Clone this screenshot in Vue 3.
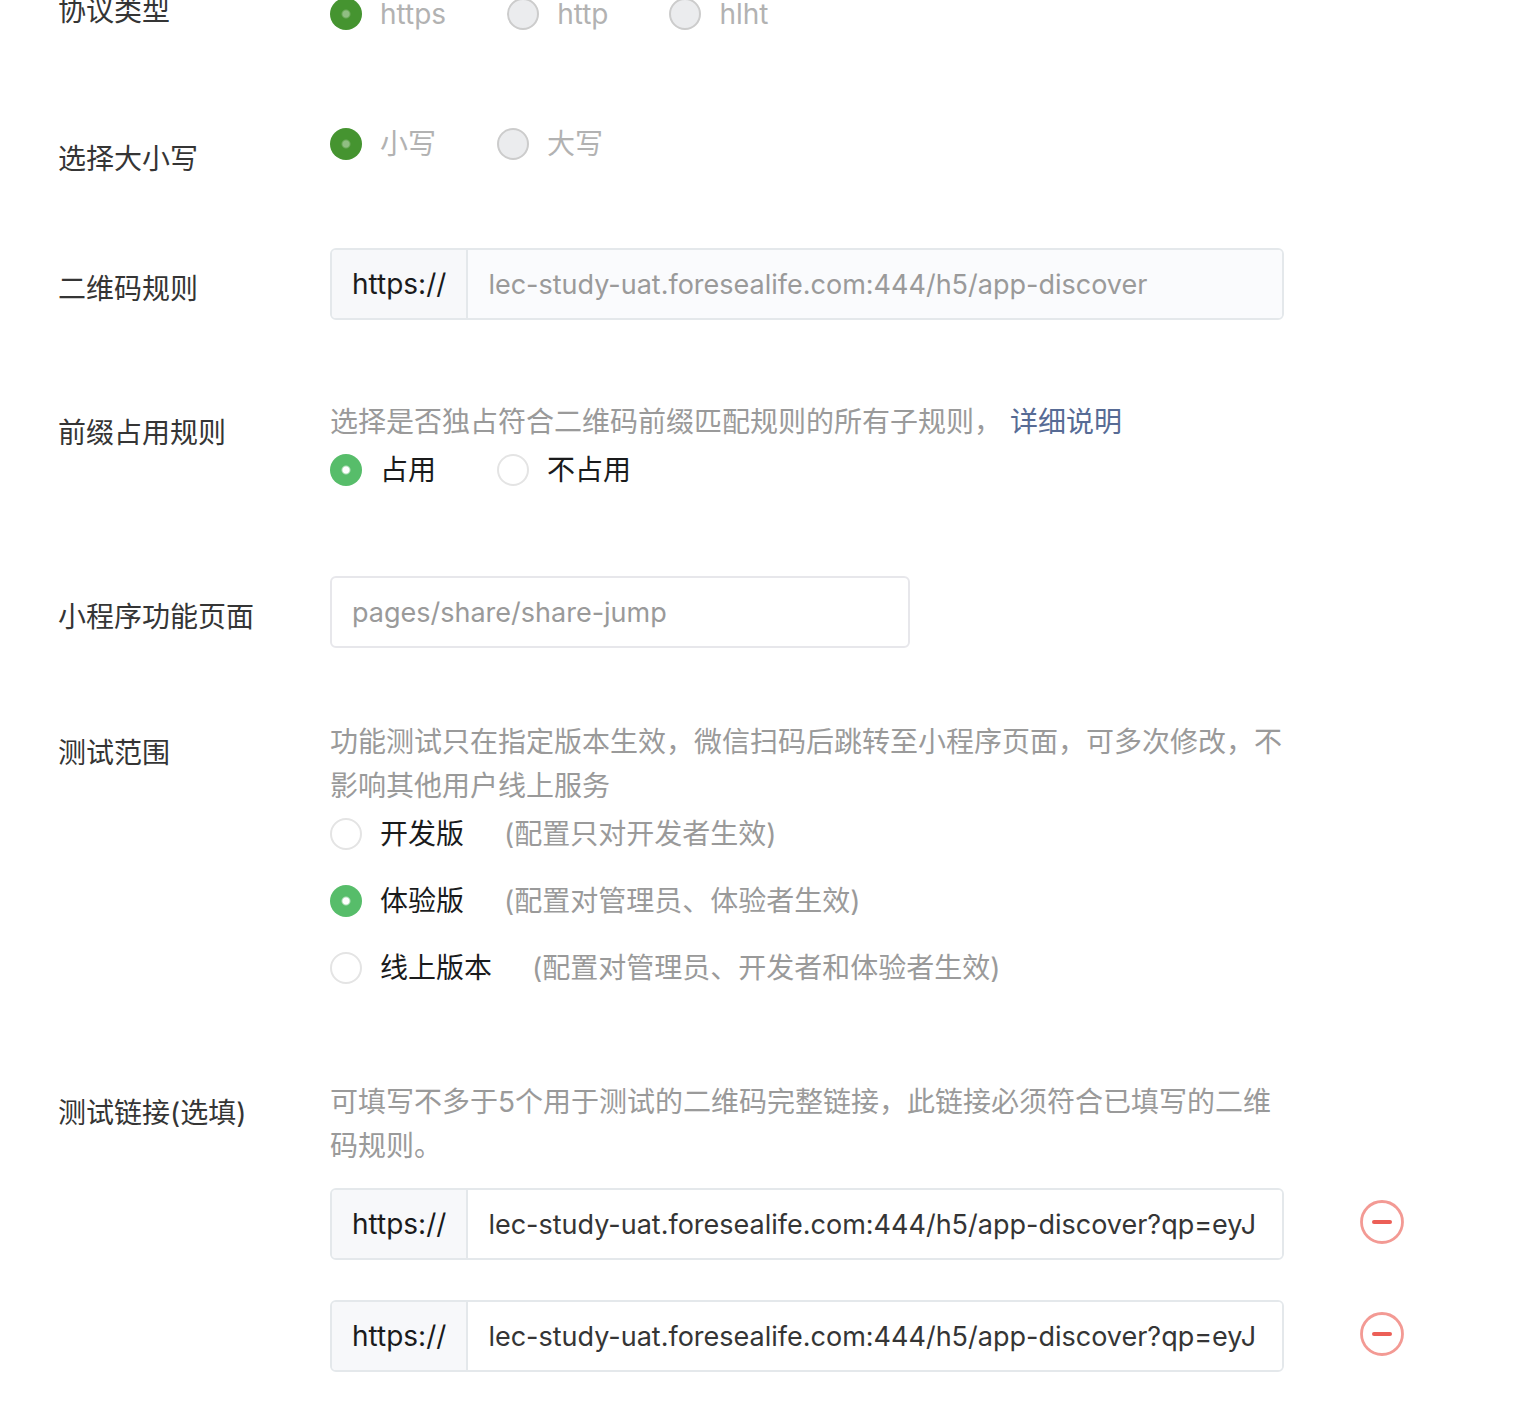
<template>
  <form class="rule-form" @submit.prevent>
    <!-- Protocol -->
    <div class="row row-protocol">
      <div id="protocol-title" class="row-title">协议类型</div>
      <div class="row-content">
        <div class="radio-list" role="radiogroup" aria-labelledby="protocol-title">
          <label v-for="item in protocols" :key="item" class="radio">
            <input v-model="protocol" type="radio" name="protocol" :value="item" disabled />
            <span>{{ item }}</span>
          </label>
        </div>
      </div>
    </div>

    <!-- Letter case -->
    <div class="row row-case">
      <div id="case-title" class="row-title">选择大小写</div>
      <div class="row-content">
        <div class="radio-list" role="radiogroup" aria-labelledby="case-title">
          <label v-for="item in letterCases" :key="item.value" class="radio">
            <input v-model="letterCase" type="radio" name="case" :value="item.value" disabled />
            <span>{{ item.label }}</span>
          </label>
        </div>
      </div>
    </div>

    <!-- QR code rule -->
    <div class="row row-field">
      <label class="row-title" for="rule">二维码规则</label>
      <div class="row-content">
        <div class="input-group disabled">
          <span class="prefix">https://</span>
          <input id="rule" v-model="rule" type="text" disabled />
        </div>
      </div>
    </div>

    <!-- Prefix occupation -->
    <div class="row row-prefix">
      <div id="occupy-title" class="row-title">前缀占用规则</div>
      <div class="row-content">
        <p class="hint">
          选择是否独占符合二维码前缀匹配规则的所有子规则，<a href="#" class="hint-link">详细说明</a>
        </p>
        <div class="radio-list after-hint" role="radiogroup" aria-labelledby="occupy-title">
          <label v-for="item in occupyOptions" :key="item.value" class="radio">
            <input v-model="occupy" type="radio" name="occupy" :value="item.value" />
            <span>{{ item.label }}</span>
          </label>
        </div>
      </div>
    </div>

    <!-- Page path -->
    <div class="row row-field row-page">
      <label class="row-title" for="page">小程序功能页面</label>
      <div class="row-content">
        <input id="page" v-model="page" class="page-input" type="text" />
      </div>
    </div>

    <!-- Test range -->
    <div class="row row-range">
      <div id="range-title" class="row-title">测试范围</div>
      <div class="row-content">
        <p class="hint">
          功能测试只在指定版本生效，微信扫码后跳转至小程序页面，可多次修改，不影响其他用户线上服务
        </p>
        <div class="version-list after-hint" role="radiogroup" aria-labelledby="range-title">
          <label v-for="item in versions" :key="item.value" class="radio">
            <input v-model="version" type="radio" name="version" :value="item.value" />
            <span>{{ item.label }}</span>
            <span class="radio-desc">{{ item.desc }}</span>
          </label>
        </div>
      </div>
    </div>

    <!-- Test links -->
    <div class="row row-links">
      <div class="row-title">测试链接(选填)</div>
      <div class="row-content">
        <p class="hint">
          可填写不多于5个用于测试的二维码完整链接，此链接必须符合已填写的二维码规则。
        </p>
        <div class="link-list">
          <div v-for="(link, index) in links" :key="link.id" class="link-item">
            <div class="input-group">
              <label class="prefix" :for="'link-' + link.id">https://</label>
              <input :id="'link-' + link.id" v-model="link.url" type="text" />
            </div>
            <button type="button" class="btn-remove" aria-label="删除" @click="removeLink(index)">
              <svg viewBox="0 0 44 44" width="44" height="44" fill="none">
                <circle cx="22" cy="22" r="20.5" stroke="#f39a94" stroke-width="2.8" />
                <path d="M14 22h16" stroke="#ec5f57" stroke-width="4" stroke-linecap="round" />
              </svg>
            </button>
          </div>
        </div>
      </div>
    </div>
  </form>
</template>

<script setup>
import { ref } from "vue";

const protocols = ["https", "http", "hlht"];
const letterCases = [
  { value: "lower", label: "小写" },
  { value: "upper", label: "大写" },
];
const occupyOptions = [
  { value: "yes", label: "占用" },
  { value: "no", label: "不占用" },
];
const versions = [
  { value: "dev", label: "开发版", desc: "(配置只对开发者生效)" },
  { value: "trial", label: "体验版", desc: "(配置对管理员、体验者生效)" },
  { value: "release", label: "线上版本", desc: "(配置对管理员、开发者和体验者生效)" },
];

const protocol = ref("https");
const letterCase = ref("lower");
const rule = ref("lec-study-uat.foresealife.com:444/h5/app-discover");
const occupy = ref("yes");
const page = ref("pages/share/share-jump");
const version = ref("trial");
const links = ref([
  { id: 1, url: "lec-study-uat.foresealife.com:444/h5/app-discover?qp=eyJ" },
  { id: 2, url: "lec-study-uat.foresealife.com:444/h5/app-discover?qp=eyJ" },
]);

function removeLink(index) {
  links.value.splice(index, 1);
}
</script>

<style>
body {
  background: #ffffff;
}
</style>

<style scoped>
.rule-form {
  margin-top: -22px;
  padding: 0 58px 40px;
  font-family: Inter, "Noto Sans CJK SC", sans-serif;
  font-size: 28px;
  line-height: 44px;
  color: #353535;
}

/* === Rows === */
.row {
  display: flex;
  align-items: flex-start;
}

.row-title {
  flex: 0 0 272px;
  padding-top: 11px;
}

.row-content {
  flex: 1;
  min-width: 0;
  max-width: 1074px;
}

.row-protocol {
  margin-bottom: 93px;
}

.row-protocol .row-content {
  padding-top: 18px;
}

.row-case {
  margin-bottom: 67px;
}

.row-field {
  margin-bottom: 80px;
}

.row-field .row-title {
  padding-top: 19px;
}

.row-prefix {
  margin-bottom: 88px;
}

.row-page {
  margin-bottom: 72px;
}

.row-range {
  margin-bottom: 94px;
}

/* === Hints === */
.hint {
  max-width: 954px;
  margin: 0;
  color: #9a9a9a;
}

.hint-link {
  margin-left: 8px;
  color: #576b95;
  text-decoration: none;
}

.after-hint {
  margin-top: 8px;
}

/* === Radios === */
.radio-list {
  display: flex;
  flex-wrap: wrap;
  gap: 61px;
}

.version-list {
  display: flex;
  flex-direction: column;
  gap: 31px;
}

.radio {
  display: flex;
  align-items: center;
  line-height: 36px;
  color: #1a1b1c;
}

.radio input {
  appearance: none;
  flex: none;
  width: 32px;
  height: 32px;
  margin: 0 18px 0 0;
  border: 2px solid #e4e4e4;
  border-radius: 50%;
  background: #ffffff;
}

.radio input:checked {
  border: 0;
  background: radial-gradient(circle, #ffffff 3px, #57bd6a 5px);
}

.radio input:disabled {
  border-color: #cccccc;
  background: #ebecee;
}

.radio input:disabled:checked {
  background: radial-gradient(circle, #8fbe82 3px, #459430 5px);
}

.radio input:disabled ~ span {
  color: #b2b2b2;
}

.radio-desc {
  margin-left: 40px;
  color: #9a9a9a;
}

/* === Inputs === */
.input-group {
  display: flex;
  box-sizing: border-box;
  height: 72px;
  max-width: 954px;
  border: 2px solid #e4e8eb;
  border-radius: 6px;
  overflow: hidden;
}

.prefix {
  flex: none;
  padding: 0 20px;
  border-right: 2px solid #e4e8eb;
  background: #f7f8fa;
  line-height: 68px;
  color: #1a1b1c;
}

.input-group input,
.page-input {
  box-sizing: border-box;
  width: 100%;
  min-width: 0;
  padding: 0 20px;
  border: 0;
  outline: 0;
  background: #ffffff;
  font-family: inherit;
  font-size: 27px;
  color: #353535;
}

.input-group.disabled input {
  background: #fafbfd;
  color: #9a9a9a;
}

.page-input {
  display: block;
  height: 72px;
  max-width: 580px;
  border: 2px solid #e7e7eb;
  border-radius: 6px;
  color: #9a9a9a;
}

/* === Test links === */
.link-list {
  display: flex;
  flex-direction: column;
  gap: 40px;
  margin-top: 20px;
}

.link-item {
  display: flex;
  align-items: center;
  gap: 76px;
}

.link-item .input-group {
  flex: 1;
  min-width: 0;
}

.btn-remove {
  flex: none;
  width: 44px;
  height: 44px;
  margin-bottom: 4px;
  padding: 0;
  border: 0;
  background: none;
  cursor: pointer;
}

.btn-remove svg {
  display: block;
}
</style>
